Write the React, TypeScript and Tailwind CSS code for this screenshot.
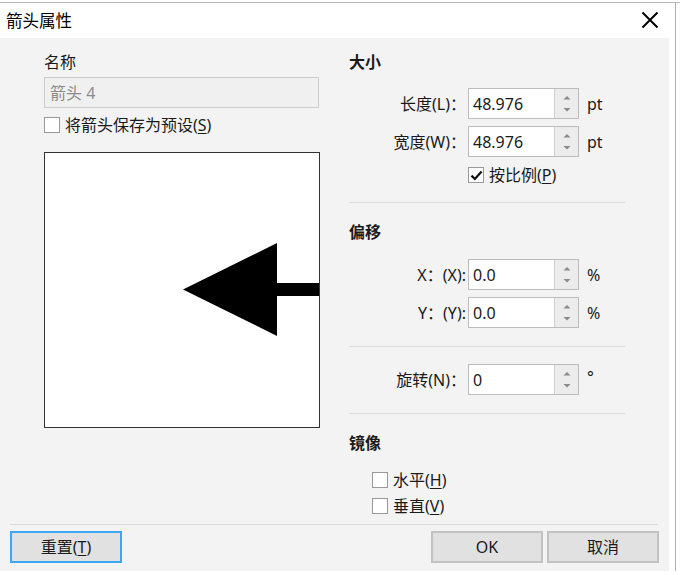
import type { ReactNode } from 'react'

type CheckProps = {
  checked?: boolean
  children: ReactNode
}

const Checkbox = ({ checked = false, children }: CheckProps) => (
  <div className="flex h-[20px] items-center gap-[5px]">
    <div className="flex h-[16px] w-[16px] items-center justify-center border border-[#999999] bg-white">
      {checked ? (
        <svg width="13" height="13" viewBox="0 0 13 13">
          <path d="M1.5 6.6 L4.9 10 L11.6 2.4" fill="none" stroke="#111" strokeWidth="2.2" />
        </svg>
      ) : null}
    </div>
    <span className="leading-[20px]">{children}</span>
  </div>
)

type RowProps = {
  label: ReactNode
  value: string
  unit?: string
}

// numeric field with spinner, label right-aligned on the left
const SpinRow = ({ label, value, unit }: RowProps) => (
  <div className="flex h-[31px] items-center">
    <div className="w-[117px] text-right leading-[20px]">{label}</div>
    <div className="ml-[2px] flex h-[31px] w-[111px] border border-[#bcbcbc] bg-white">
      <div className="flex flex-1 items-center pl-[4px] leading-[20px]">{value}</div>
      <div className="flex w-[24px] flex-col items-center justify-center border-l border-[#cfcfcf] bg-[#ececec]">
        <svg width="24" height="29" viewBox="0 0 24 29">
          <path d="M8.5 10.5 L12 7 L15.5 10.5 Z" fill="#8a8a8a" />
          <path d="M8.5 19 L12 22.5 L15.5 19 Z" fill="#8a8a8a" />
        </svg>
      </div>
    </div>
    {unit ? <span className={unit === '°' ? 'ml-[8px] -mt-[6px] leading-[20px]' : 'ml-[8px] leading-[20px]'}>{unit}</span> : null}
  </div>
)

const Sep = ({ className }: { className: string }) => <div className={`h-px w-[276px] bg-[#dcdcdc] ${className}`} />

const U = ({ children }: { children: ReactNode }) => <span className="underline underline-offset-2">{children}</span>

export default function App() {
  return (
    <div className="flex h-[575px] w-[680px] flex-col overflow-hidden bg-white font-['Noto_Sans','Noto_Sans_CJK_SC',sans-serif] text-[16px] text-[#1a1a1a]">
      <div className="h-[3px] shrink-0 border-b border-[#b8b8b8]" />
      <div className="flex">
        <div className="w-[676px] border-r border-[#b0b0b0]">
          {/* title bar */}
          <div className="flex h-[35px] items-center justify-between pl-[6px] pr-[16px]">
            <span className="text-[16.5px] leading-[20px] text-black">箭头属性</span>
            <svg width="18" height="18" viewBox="0 0 18 18" className="mt-[-1px]">
              <path d="M1.5 1.5 L16.5 16.5 M16.5 1.5 L1.5 16.5" stroke="#000" strokeWidth="2" />
            </svg>
          </div>

          {/* body */}
          <div className="flex h-[533px] w-[669px] flex-col bg-[#f3f3f3]">
            <div className="flex h-[486px] gap-[29px] pl-[44px] pt-[14px]">
              {/* left column */}
              <div className="flex w-[276px] flex-col">
                <div className="leading-[20px]">名称</div>
                <div className="mt-[5px] flex h-[31px] w-[275px] items-center border border-[#cccccc] bg-[#f0f0f0] pl-[5px] text-[#8c8c8c]">
                  箭头 4
                </div>
                <div className="mt-[7px]">
                  <Checkbox>
                    将箭头保存为预设(<U>S</U>)
                  </Checkbox>
                </div>
                <div className="mt-[17px] h-[276px] w-[276px] border border-[#333333] bg-white">
                  <svg width="274" height="274" viewBox="0 0 274 274">
                    <path d="M138 136.5 L232 90 L232 183 Z" fill="#000" />
                    <rect x="231" y="130" width="43" height="13" fill="#000" />
                  </svg>
                </div>
              </div>

              {/* right column */}
              <div className="flex w-[276px] flex-col">
                <div className="font-bold leading-[20px]">大小</div>
                <div className="mt-[16px]">
                  <SpinRow label="长度(L)：" value="48.976" unit="pt" />
                </div>
                <div className="mt-[7px]">
                  <SpinRow label="宽度(W)：" value="48.976" unit="pt" />
                </div>
                <div className="ml-[119px] mt-[8px]">
                  <Checkbox checked>
                    按比例(<U>P</U>)
                  </Checkbox>
                </div>
                <Sep className="mt-[17px]" />
                <div className="mt-[19px] font-bold leading-[20px]">偏移</div>
                <div className="mt-[17px]">
                  <SpinRow label="X：(X):" value="0.0" unit="%" />
                </div>
                <div className="mt-[7px]">
                  <SpinRow label="Y：(Y):" value="0.0" unit="%" />
                </div>
                <Sep className="mt-[18px]" />
                <div className="mt-[17px]">
                  <SpinRow label="旋转(N)：" value="0" unit="°" />
                </div>
                <Sep className="mt-[18px]" />
                <div className="mt-[19px] font-bold leading-[20px]">镜像</div>
                <div className="ml-[23px] mt-[17px]">
                  <Checkbox>
                    水平(<U>H</U>)
                  </Checkbox>
                </div>
                <div className="ml-[23px] mt-[6px]">
                  <Checkbox>
                    垂直(<U>V</U>)
                  </Checkbox>
                </div>
              </div>
            </div>

            <div className="ml-[10px] h-px w-[648px] bg-[#dadada]" />

            {/* footer buttons */}
            <div className="flex pl-[10px] pt-[6px]">
              <button className="flex h-[32px] w-[112px] items-center justify-center border-2 border-[#3aa8f5] bg-[#e1e1e1] leading-[20px]">
                重置(<U>T</U>)
              </button>
              <div className="ml-auto mr-[10px] flex gap-[4px]">
                <button className="flex h-[32px] w-[112px] items-center justify-center border-2 border-[#c2c2c2] bg-[#e1e1e1] leading-[20px]">
                  OK
                </button>
                <button className="flex h-[32px] w-[112px] items-center justify-center border-2 border-[#c2c2c2] bg-[#e1e1e1] leading-[20px]">
                  取消
                </button>
              </div>
            </div>
          </div>
        </div>
        <div className="flex-1 bg-white" />
      </div>
    </div>
  )
}
